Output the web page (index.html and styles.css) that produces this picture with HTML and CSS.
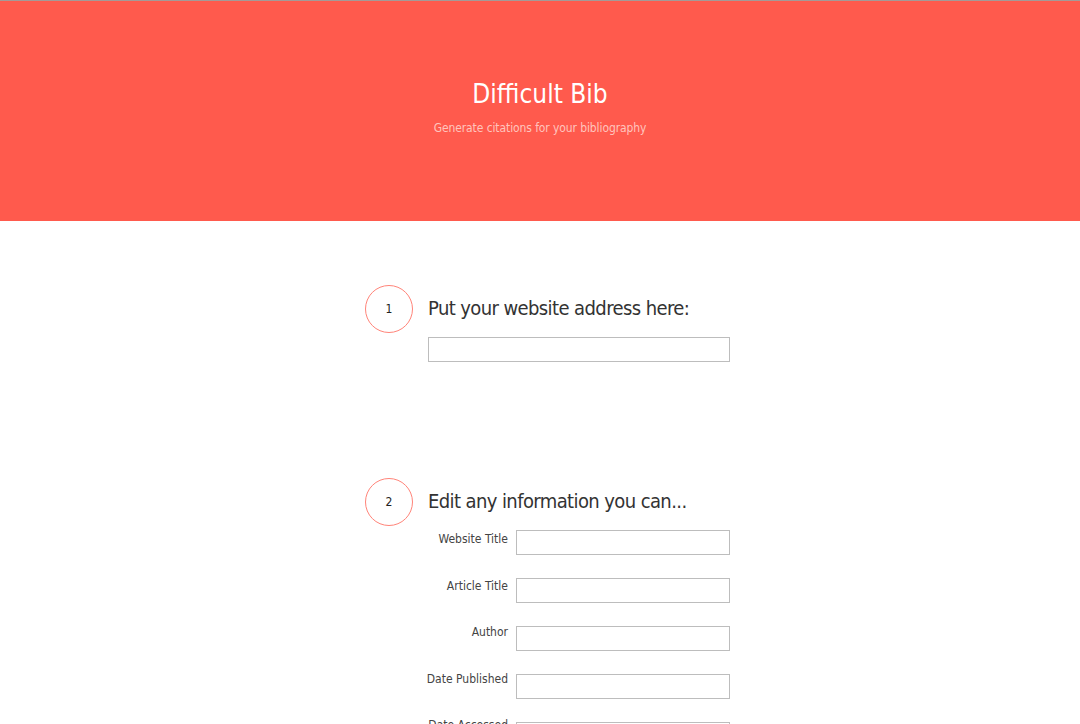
FILE: index.html
```html
<!DOCTYPE html>
<html>
<head>
<meta charset="utf-8">
<title>Difficult Bib</title>
<link rel="stylesheet" href="styles.css">
</head>
<body>
<header class="hero">
  <h1 class="hero-title">Difficult Bib</h1>
  <p class="hero-sub">Generate citations for your bibliography</p>
</header>
<main class="steps">
  <section class="step step-one">
    <div class="step-num">1</div>
    <div class="step-body">
      <h2 class="step-title">Put your website address here:</h2>
      <input class="field field-wide" type="text">
    </div>
  </section>
  <section class="step step-two">
    <div class="step-num">2</div>
    <div class="step-body">
      <h2 class="step-title">Edit any information you can...</h2>
      <div class="rows">
        <div class="labels">
          <label class="row-label" for="f1">Website Title</label>
          <label class="row-label" for="f2">Article Title</label>
          <label class="row-label" for="f3">Author</label>
          <label class="row-label" for="f4">Date Published</label>
          <label class="row-label" for="f5">Date Accessed</label>
        </div>
        <div class="inputs">
          <input class="field" id="f1" type="text">
          <input class="field" id="f2" type="text">
          <input class="field" id="f3" type="text">
          <input class="field" id="f4" type="text">
          <input class="field" id="f5" type="text">
        </div>
      </div>
    </div>
  </section>
</main>
</body>
</html>
```
FILE: styles.css
```css
html, body {
  margin: 0;
  padding: 0;
  background: #ffffff;
  font-family: "DejaVu Sans Condensed", "DejaVu Sans", sans-serif;
  color: #333333;
}
.hero {
  background: #ff5a4d;
  border-top: 1px solid #a59a98;
  height: 220px;
  box-sizing: content-box;
  display: flex;
  flex-direction: column;
  align-items: center;
}
.hero-title {
  margin: 77px 0 0 0;
  font-size: 26px;
  font-weight: normal;
  color: #ffffff;
  line-height: 32px;
}
.hero-sub {
  margin: 10px 0 0 0;
  font-size: 12px;
  letter-spacing: -0.1px;
  color: #ffc4bd;
  line-height: 16px;
}
.steps {
  width: 364px;
  margin: 0 0 0 calc(50% - 175px);
  padding-top: 64px;
}
.step {
  display: flex;
  align-items: flex-start;
  gap: 15px;
}
.step-two {
  margin-top: 116px;
}
.step-num {
  width: 46px;
  height: 46px;
  border: 1px solid #ff8479;
  border-radius: 50%;
  flex: none;
  display: flex;
  align-items: center;
  justify-content: center;
  font-size: 12px;
  color: #222222;
}
.step-body {
  width: 302px;
}
.step-title {
  margin: 10px 0 0 0;
  font-size: 20px;
  letter-spacing: -0.6px;
  font-weight: normal;
  line-height: 26px;
  color: #333333;
}
.field {
  display: block;
  box-sizing: border-box;
  height: 25px;
  width: 214px;
  border: 1px solid #bdbdbd;
  background: #ffffff;
  margin: 0;
  padding: 0 4px;
}
.field-wide {
  width: 302px;
  margin-top: 16px;
}
.rows {
  margin-top: 16px;
  display: flex;
  gap: 8px;
  align-items: flex-start;
}
.labels {
  width: 80px;
  padding-top: 1px;
  display: flex;
  flex-direction: column;
  align-items: flex-end;
  gap: 30.5px;
}
.inputs {
  display: flex;
  flex-direction: column;
  gap: 23px;
}
.row-label {
  display: block;
  text-align: right;
  font-size: 12px;
  line-height: 16px;
  color: #444444;
  white-space: nowrap;
}
```
